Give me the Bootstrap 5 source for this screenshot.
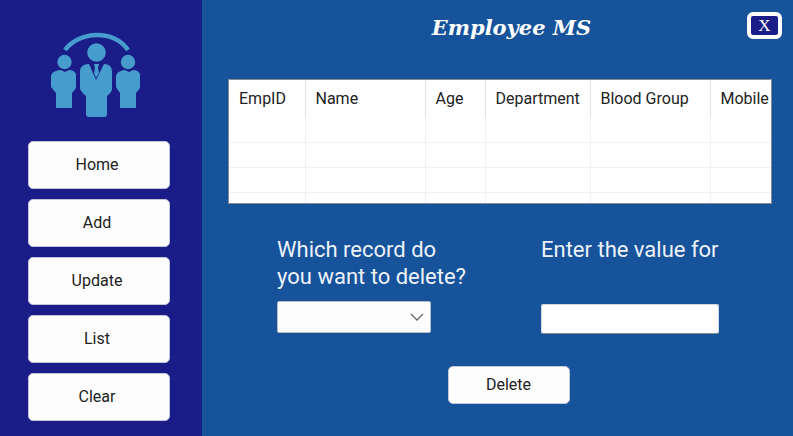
<!DOCTYPE html>
<html lang="en">
<head>
<meta charset="utf-8">
<meta name="viewport" content="width=device-width, initial-scale=1">
<title>Employee MS</title>
<link href="https://cdn.jsdelivr.net/npm/bootstrap@5.3.0/dist/css/bootstrap.min.css" rel="stylesheet">
<style>
body { background: #16539b; font-family: Roboto, "Liberation Sans", sans-serif; font-size: 16px; line-height: 24px; color: #222; }
.side-panel { width: 202px; background: #1a1d87; padding: 32px 32px 14px 28px; gap: 10px; }
.team-logo { width: 90px; height: 86px; margin: 0 0 13px 23px; }
.btn-plain { --bs-btn-bg: #fdfdfd; --bs-btn-color: #222; --bs-btn-border-color: #c3c6d6; --bs-btn-hover-bg: #e8f1fa; --bs-btn-hover-color: #222; --bs-btn-active-bg: #d5e6f5; --bs-btn-font-size: 16px; --bs-btn-line-height: 24px; --bs-btn-border-radius: 5px; --bs-btn-padding-y: 11px; font-family: inherit; }
.side-panel .btn-plain { padding-right: 16px; }
.btn-delete { --bs-btn-padding-y: 6px; width: 122px; }
.top-bar { padding: 12px 11px 0 74px; }
.app-title { font: italic bold 21px/32px Rockwell, "DejaVu Serif", serif; }
.btn-exit { width: 35px; height: 27px; border: 4px solid #fdfdfd; border-radius: 6px; background: #1a1d87; color: #fff; font: 17px/19px "Liberation Serif", serif; }
.record-list { margin: 35px 21px 0 26px; height: 125px; border: 1px solid #868c96; background: #fff; }
.record-list table { table-layout: fixed; }
.record-list th { height: 37px; padding: 1px 0 0 10px; font-weight: 400; white-space: nowrap; border-right: 1px solid #e3e3e3; }
.record-list td { height: 25px; padding: 0; border-right: 1px solid #f1f1f1; border-bottom: 1px solid #f1f1f1; }
.record-list th:last-child, .record-list td:last-child { border-right: 0; }
.c-id { width: 76px; } .c-name { width: 120px; } .c-age { width: 60px; } .c-dept { width: 105px; } .c-blood { width: 120px; }
.query { padding: 32px 74px 0 75px; }
.query label { font-size: 22px; line-height: 27px; color: #edf2fa; }
.q-record { width: 196px; }
.q-value { width: 178px; }
.query .form-select { width: 154px; height: 32px; margin-top: 10px; border: 1px solid #b5bdc9; border-radius: 2px; background-color: #fdfdfd; padding: 0 28px 0 8px; background-position: right 6px center; background-size: 14px 14px;
  background-image: url("data:image/svg+xml,%3csvg xmlns='http://www.w3.org/2000/svg' viewBox='0 0 14 14'%3e%3cpath fill='none' stroke='%23666' stroke-width='1.3' d='M1 4l6 6 6-6'/%3e%3c/svg%3e"); }
.query .form-control { height: 30px; margin-top: 40px; border: 1px solid #d3d8df; border-bottom-color: #858b94; border-radius: 2px; padding: 0 8px; }
.action-row { padding: 32px 0 16px 22px; }
</style>
</head>
<body>
<div class="d-flex min-vh-100">
  <nav class="side-panel d-flex flex-column flex-shrink-0" aria-label="Main">
    <svg class="team-logo flex-shrink-0" viewBox="0 0 90 86" fill="#469dcd" aria-hidden="true">
      <path d="M14 18C28-1 63-3 77 18" fill="none" stroke="#469dcd" stroke-width="4.500"/>
      <circle cx="45.500" cy="20.500" r="9.300"/>
      <circle cx="13.500" cy="30" r="7.200"/>
      <circle cx="77" cy="30" r="7.200"/>
      <path d="M5 39Q7 38 10 38l4 2 4-2Q23 38 25 42v14l-4 5v15H5V61L0 55V44Q1 40 5 39Z"/>
      <path d="M70 39Q72 38 74 38l4 2 4-2Q87 38 89 42v14l-4 5v15H69V61L65 55V44Q66 40 70 39Z"/>
      <path d="M33 33Q35 32 38 32l7 16 8-16Q57 32 59 34q2 2 2 5v18q0 3-5 7v18q0 3-3 3H38q-3 0-3-3V64q-6-5-6-8V39q0-4 4-6Z"/>
      <path d="M43 32h5l-1 4 1 5-3 5-2-5 1-5Z"/>
    </svg>
    <button type="button" class="btn btn-plain">Home</button>
    <button type="button" class="btn btn-plain">Add</button>
    <button type="button" class="btn btn-plain">Update</button>
    <button type="button" class="btn btn-plain">List</button>
    <button type="button" class="btn btn-plain">Clear</button>
  </nav>
  <main class="flex-grow-1 overflow-hidden">
    <header class="top-bar d-flex align-items-start">
      <h1 class="app-title flex-grow-1 text-center text-white m-0">Employee MS</h1>
      <button type="button" class="btn-exit p-0">X</button>
    </header>
    <div class="record-list overflow-hidden">
      <table class="w-100">
        <colgroup><col class="c-id"><col class="c-name"><col class="c-age"><col class="c-dept"><col class="c-blood"><col></colgroup>
        <thead><tr><th scope="col">EmpID</th><th scope="col">Name</th><th scope="col">Age</th><th scope="col">Department</th><th scope="col">Blood Group</th><th scope="col">Mobile</th></tr></thead>
        <tbody>
          <tr><td></td><td></td><td></td><td></td><td></td><td></td></tr>
          <tr><td></td><td></td><td></td><td></td><td></td><td></td></tr>
          <tr><td></td><td></td><td></td><td></td><td></td><td></td></tr>
          <tr><td></td><td></td><td></td><td></td><td></td><td></td></tr>
        </tbody>
      </table>
    </div>
    <form>
      <div class="query d-flex justify-content-between">
        <div class="q-record">
          <label for="record">Which record do you want to delete?</label>
          <select id="record" class="form-select"><option value=""></option><option>EmpID</option><option>Name</option></select>
        </div>
        <div class="q-value">
          <label for="value" class="text-nowrap">Enter the value for</label>
          <input id="value" type="text" class="form-control">
        </div>
      </div>
      <div class="action-row text-center">
        <button type="button" class="btn btn-plain btn-delete">Delete</button>
      </div>
    </form>
  </main>
</div>
<script src="https://cdn.jsdelivr.net/npm/bootstrap@5.3.0/dist/js/bootstrap.bundle.min.js"></script>
</body>
</html>
